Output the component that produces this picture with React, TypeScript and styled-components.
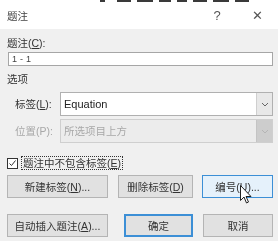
import React from "react";
import styled, { createGlobalStyle } from "styled-components";

const Global = createGlobalStyle`
  html, body {
    margin: 0;
    padding: 0;
    background: #f0f0f0;
  }
  body {
    font-family: "Liberation Sans", "Noto Sans CJK SC", sans-serif;
    font-size: 10.5px;
    color: #333;
  }
`;

// the reference is a soft video frame, so the whole dialog is blurred a touch
const Window = styled.div`
  width: 278px;
  height: 241px;
  overflow: hidden;
  position: relative;
  background: #f0f0f0;
  filter: blur(0.35px);
`;

// bits of the document behind the dialog, cut off at the top
const Backdrop = styled.div`
  height: 2px;
  overflow: hidden;
  background: #fff;
  padding-left: 100px;
  display: flex;
  gap: 6px;
`;

const BackdropGlyph = styled.span<{ $w: number }>`
  display: block;
  width: ${(p) => p.$w}px;
  height: 2px;
  background: #3a3a3a;
`;

const TitleBar = styled.div`
  height: 27px;
  background: #fff;
  display: flex;
  align-items: center;
  padding-left: 7px;
`;

const Title = styled.span`
  flex: 1;
  color: #444;
`;

const TitleButton = styled.span<{ $mr?: number }>`
  width: 20px;
  margin-right: ${(p) => p.$mr ?? 0}px;
  text-align: center;
  color: #555;
  font-size: 13px;
`;

const Body = styled.div`
  padding: 7px 5px 0 7px;
`;

const Label = styled.div<{ $mt?: number; $muted?: boolean }>`
  line-height: 14px;
  margin-top: ${(p) => p.$mt ?? 0}px;
  color: ${(p) => (p.$muted ? "#a8a8a8" : "#333")};
  white-space: nowrap;
`;

const TextInput = styled.div`
  margin: 2px 0 0 1px;
  height: 12px;
  border: 1px solid #a6a6a6;
  background: #fff;
  font-size: 9px;
  line-height: 12px;
  letter-spacing: 3px;
  padding-left: 3px;
  color: #444;
`;

const FieldRow = styled.div<{ $mt: number }>`
  display: flex;
  align-items: center;
  margin-top: ${(p) => p.$mt}px;
  padding-left: 8px;
`;

const FieldLabel = styled(Label)`
  width: 45px;
`;

const Select = styled.div<{ $disabled?: boolean }>`
  flex: 1;
  height: 22px;
  display: flex;
  border: 1px solid ${(p) => (p.$disabled ? "#cfcfcf" : "#b0b0b0")};
  background: ${(p) => (p.$disabled ? "#ececec" : "#fff")};
`;

const SelectValue = styled.div<{ $disabled?: boolean }>`
  flex: 1;
  padding-left: 3px;
  line-height: 22px;
  font-size: ${(p) => (p.$disabled ? 10.5 : 11)}px;
  color: ${(p) => (p.$disabled ? "#a8a8a8" : "#222")};
`;

const SelectArrow = styled.div<{ $disabled?: boolean }>`
  width: 15px;
  display: flex;
  align-items: center;
  justify-content: center;
  border-left: 1px solid ${(p) => (p.$disabled ? "#c4c4c4" : "#cfcfcf")};
  background: ${(p) => (p.$disabled ? "#cdcdcd" : "#e8e8e8")};
`;

const CheckRow = styled.div`
  display: flex;
  align-items: center;
  margin-top: 13px;
  gap: 3px;
`;

const CheckBox = styled.div`
  width: 9px;
  height: 9px;
  border: 1px solid #333;
  background: #fff;
  display: flex;
  align-items: center;
  justify-content: center;
`;

const FocusLabel = styled.span`
  border: 1px dotted #333;
  line-height: 12px;
  padding: 0 1px;
`;

const ButtonRow = styled.div<{ $mt: number }>`
  display: flex;
  margin-top: ${(p) => p.$mt}px;
`;

const Button = styled.div<{
  $w: number;
  $ml?: number;
  $hover?: boolean;
  $default?: boolean;
}>`
  width: ${(p) => p.$w}px;
  height: 23px;
  margin-left: ${(p) => p.$ml ?? 0}px;
  box-sizing: border-box;
  display: flex;
  align-items: center;
  justify-content: center;
  white-space: nowrap;
  color: #333;
  background: ${(p) => (p.$hover ? "#e5f1fb" : "#e1e1e1")};
  border: ${(p) =>
    p.$default
      ? "2px solid #3c8fd6"
      : p.$hover
      ? "1px solid #3c8fd6"
      : "1px solid #b4b4b4"};
`;

const Cursor = styled.svg`
  position: absolute;
  left: 240px;
  top: 185px;
`;

const Chevron = ({ color }: { color: string }) => (
  <svg width="8" height="5" viewBox="0 0 8 5">
    <path d="M1 1l3 3 3-3" fill="none" stroke={color} strokeWidth="1" />
  </svg>
);

export default function App() {
  return (
    <Window>
      <Global />
      <Backdrop>
        <BackdropGlyph $w={5} />
        <BackdropGlyph $w={0} />
        <BackdropGlyph $w={14} />
        <BackdropGlyph $w={16} />
        <BackdropGlyph $w={12} />
        <BackdropGlyph $w={10} />
        <BackdropGlyph $w={14} />
        <BackdropGlyph $w={16} />
        <BackdropGlyph $w={14} />
      </Backdrop>
      <TitleBar>
        <Title>题注</Title>
        <TitleButton>?</TitleButton>
        <TitleButton $mr={11} style={{ marginLeft: 20 }}>
          ✕
        </TitleButton>
      </TitleBar>
      <Body>
        <Label>
          题注(<u>C</u>):
        </Label>
        <TextInput>1-1</TextInput>
        <Label $mt={6}>选项</Label>
        <FieldRow $mt={6}>
          <FieldLabel>
            标签(<u>L</u>):
          </FieldLabel>
          <Select>
            <SelectValue>Equation</SelectValue>
            <SelectArrow>
              <Chevron color="#666" />
            </SelectArrow>
          </Select>
        </FieldRow>
        <FieldRow $mt={3}>
          <FieldLabel $muted>位置(P):</FieldLabel>
          <Select $disabled>
            <SelectValue $disabled>所选项目上方</SelectValue>
            <SelectArrow $disabled>
              <Chevron color="#b5b5b5" />
            </SelectArrow>
          </Select>
        </FieldRow>
        <CheckRow>
          <CheckBox>
            <svg width="9" height="9" viewBox="0 0 9 9">
              <path d="M1.5 4.5l2 2 4-5" fill="none" stroke="#333" strokeWidth="1" />
            </svg>
          </CheckBox>
          <FocusLabel>
            题注中不包含标签(<u>E</u>)
          </FocusLabel>
        </CheckRow>
        <ButtonRow $mt={5}>
          <Button $w={101}>
            新建标签(<u>N</u>)...
          </Button>
          <Button $w={75} $ml={10}>
            删除标签(<u>D</u>)
          </Button>
          <Button $w={71} $ml={9} $hover>
            编号(<u>U</u>)...
          </Button>
        </ButtonRow>
        <ButtonRow $mt={16}>
          <Button $w={101}>
            自动插入题注(<u>A</u>)...
          </Button>
          <Button $w={69} $ml={16} $default>
            确定
          </Button>
          <Button $w={70} $ml={10}>
            取消
          </Button>
        </ButtonRow>
      </Body>
      <Cursor width="12" height="19" viewBox="0 0 12 19">
        <path
          d="M0.5 0.5v15l3.5-3.5 2.5 6 2-1-2.5-5.5h5z"
          fill="#fff"
          stroke="#222"
          strokeWidth="1"
          strokeLinejoin="round"
        />
      </Cursor>
    </Window>
  );
}
